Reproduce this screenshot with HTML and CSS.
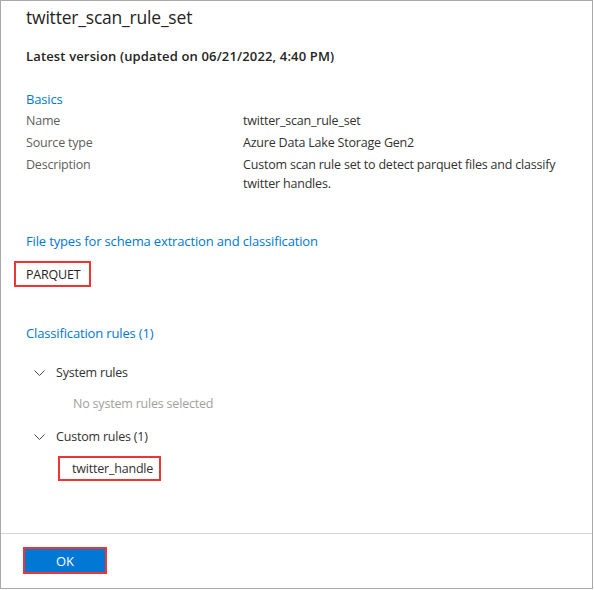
FILE: index.html
```html
<!DOCTYPE html>
<html>
<head>
<meta charset="utf-8">
<link rel="stylesheet" href="styles.css">
</head>
<body>
<div class="frame">
  <div class="content">
    <h1 class="title">twitter_scan_rule_set</h1>
    <div class="version">Latest version (updated on 06/21/2022, 4:40 PM)</div>

    <div class="section-title basics">Basics</div>
    <div class="props">
      <div class="prop-label">Name</div>
      <div class="prop-value">twitter_scan_rule_set</div>
      <div class="prop-label">Source type</div>
      <div class="prop-value">Azure Data Lake Storage Gen2</div>
      <div class="prop-label">Description</div>
      <div class="prop-value">Custom scan rule set to detect parquet files and classify twitter handles.</div>
    </div>

    <div class="section-title filetypes">File types for schema extraction and classification</div>
    <div class="hl hl-parquet">PARQUET</div>

    <div class="section-title classrules">Classification rules (1)</div>
    <div class="group">
      <div class="group-head">
        <svg class="chev" width="11" height="6" viewBox="0 0 11 6"><path d="M0.5 0.5 L5.5 5.5 L10.5 0.5" fill="none" stroke="#444" stroke-width="1"/></svg>
        <span>System rules</span>
      </div>
      <div class="empty">No system rules selected</div>
    </div>
    <div class="group group-custom">
      <div class="group-head">
        <svg class="chev" width="11" height="6" viewBox="0 0 11 6"><path d="M0.5 0.5 L5.5 5.5 L10.5 0.5" fill="none" stroke="#444" stroke-width="1"/></svg>
        <span>Custom rules (1)</span>
      </div>
      <div class="hl hl-rule">twitter_handle</div>
    </div>
  </div>
  <div class="footer">
    <button class="ok">OK</button>
  </div>
</div>
</body>
</html>
```

FILE: styles.css
```css
* { box-sizing: border-box; }
html, body { margin: 0; padding: 0; background: #fff; }
body {
  font-family: "Segoe UI", "Open Sans", "Noto Sans", sans-serif;
  font-size: 12.5px;
  letter-spacing: -0.2px;
  color: #323130;
}
.frame {
  width: 593px;
  height: 589px;
  border: 1px solid #a9a9a9;
  display: flex;
  flex-direction: column;
}
.content {
  flex: 1;
  padding: 4px 0 0 25px;
}
.title {
  margin: 0;
  font-size: 17.5px;
  letter-spacing: -0.2px;
  line-height: 24px;
  font-weight: 400;
  color: #252423;
}
.version {
  margin-top: 17px;
  line-height: 20px;
  font-size: 13px;
  font-weight: 600;
  letter-spacing: 0.15px;
  color: #252423;
}
.section-title {
  color: #0078d4;
  line-height: 20px;
  font-size: 13px;
  letter-spacing: -0.15px;
}
.basics { margin-top: 23px; }
.props {
  display: grid;
  grid-template-columns: 217px 330px;
  row-gap: 3px;
  margin-top: 2px;
  line-height: 19px;
}
.prop-label { color: #605e5c; }
.prop-value { color: #323130; }
.filetypes { margin-top: 38px; }
.hl {
  border: 2px solid #f03434;
  display: inline-block;
}
.hl-parquet {
  margin: 10px 0 0 -12px;
  width: 77px;
  height: 26px;
  padding-left: 10px;
  line-height: 24px;
  color: #252423;
}
.classrules { margin-top: 36px; }
.group { padding-left: 8px; margin-top: 20px; }
.group-head {
  display: flex;
  align-items: center;
  gap: 11px;
  line-height: 20px;
}
.chev { display: block; }
.group-custom { margin-top: 13px; }
.empty {
  margin-top: 11px;
  padding-left: 39px;
  color: #a19f9d;
  line-height: 20px;
}
.hl-rule {
  margin: 9px 0 0 24px;
  width: 103px;
  height: 25px;
  padding-left: 12px;
  line-height: 21px;
  color: #323130;
}
.footer {
  height: 55px;
  border-top: 1px solid #d4d4d4;
  padding: 13px 0 0 22px;
}
.ok {
  display: block;
  width: 84px;
  height: 27px;
  border: 2px solid #f03434;
  background: #0078d4;
  color: #fff;
  font-family: inherit;
  font-size: 13px;
  padding: 0;
  margin: 0;
}
```
